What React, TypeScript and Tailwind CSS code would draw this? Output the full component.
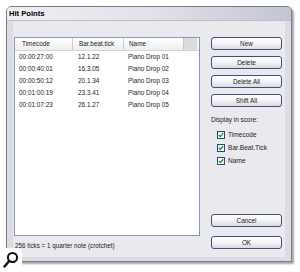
const rows = [
  ["00:00:27:00", "12.1.22", "Piano Drop 01"],
  ["00:00:40:01", "16.3.05", "Piano Drop 02"],
  ["00:00:50:12", "20.1.34", "Piano Drop 03"],
  ["00:01:00:19", "23.3.41", "Piano Drop 04"],
  ["00:01:07:23", "26.1.27", "Piano Drop 05"],
];

function Btn({ label, className = "" }: { label: string; className?: string }) {
  return (
    <div
      className={`h-[13px] w-[71px] rounded-[3px] border border-[#3f5079] bg-gradient-to-b from-white via-[#f4f4f6] to-[#d9d9e2] flex items-center justify-center text-[6.4px] text-[#222] ${className}`}
    >
      {label}
    </div>
  );
}

function Check({ label }: { label: string }) {
  return (
    <div className="flex items-center h-[13px] gap-[3px] pl-[6px]">
      <div className="w-[8px] h-[8px] border border-[#1f4f82] bg-white flex items-center justify-center">
        <svg width="6" height="6" viewBox="0 0 6 6">
          <path d="M0.8 3 L2.3 4.5 L5.2 1.2" stroke="#1f9a2a" strokeWidth="1.3" fill="none" />
        </svg>
      </div>
      <span className="text-[6.6px] text-[#222]">{label}</span>
    </div>
  );
}

export default function App() {
  return (
    <div className="relative w-[300px] h-[272px] bg-white overflow-hidden" style={{ fontFamily: '"Liberation Sans", Arial, sans-serif' }}>
      <div className="ml-[6px] mt-[6px] w-[286px] h-[256px] rounded-t-[5px] border border-[#7a7c8a] bg-[#eae9ed] shadow-[2px_2px_2px_rgba(0,0,0,0.35)] flex flex-col overflow-hidden">
        {/* title bar */}
        <div className="h-[14px] bg-gradient-to-r from-[#efeff3] via-[#e2e2e9] to-[#c4c5d4] border-b border-[#bebfca] flex items-center pl-[2px]">
          <span className="text-[7.6px] font-bold text-black">Hit Points</span>
        </div>

        <div className="flex flex-1 border-l-[6px] border-r-[6px] border-b-[4px] border-[#dcdce2] pt-[16px]">
          {/* left: list + note */}
          <div className="flex flex-col">
            <div className="ml-[1px] w-[186px] h-[199px] border border-[#7f9db9] bg-white">
              <div className="h-[13px] flex bg-gradient-to-b from-white to-[#eeeef0] border-b border-[#d5d5d8] text-[6.4px] text-[#222]">
                <div className="w-[58px] border-r border-[#cfcfd3] pl-[7px] flex items-center">Timecode</div>
                <div className="w-[51px] border-r border-[#cfcfd3] pl-[6px] flex items-center">Bar.beat.tick</div>
                <div className="w-[59px] pl-[5px] flex items-center">Name</div>
                <div className="w-[14px] bg-[#dcdcdf] border-l border-[#c8c8cc]" />
              </div>
              {rows.map((r) => (
                <div key={r[0]} className="h-[12px] flex items-center text-[6.4px] text-[#222]">
                  <div className="w-[63px] pl-[4px]">{r[0]}</div>
                  <div className="w-[50px]">{r[1]}</div>
                  <div>{r[2]}</div>
                </div>
              ))}
            </div>
            <div className="mt-[5px] ml-[2px] text-[6.3px] text-[#222]">256 ticks = 1 quarter note (crotchet)</div>
          </div>

          {/* right: buttons */}
          <div className="ml-[11px] flex flex-col">
            <div className="flex flex-col gap-[6px]">
              <Btn label="New" />
              <Btn label="Delete" />
              <Btn label="Delete All" />
              <Btn label="Shift All" />
            </div>
            <div className="mt-[8px] text-[6.4px] text-[#222] h-[10px] flex items-center">Display in score:</div>
            <div className="mt-[3px] flex flex-col">
              <Check label="Timecode" />
              <Check label="Bar.Beat.Tick" />
              <Check label="Name" />
            </div>
            <div className="mt-[47px] flex flex-col gap-[9px]">
              <Btn label="Cancel" />
              <Btn label="OK" />
            </div>
          </div>
        </div>
      </div>

      {/* magnifier badge */}
      <div className="absolute left-0 bottom-0 w-[22px] h-[24px] bg-white rounded-tr-[6px] flex items-center justify-center">
        <svg width="18" height="20" viewBox="0 0 18 20">
          <circle cx="10.5" cy="7.5" r="4.6" stroke="#111" strokeWidth="2" fill="none" />
          <path d="M7.2 11 L2.5 16.5" stroke="#111" strokeWidth="2.4" strokeLinecap="round" />
        </svg>
      </div>
    </div>
  );
}
